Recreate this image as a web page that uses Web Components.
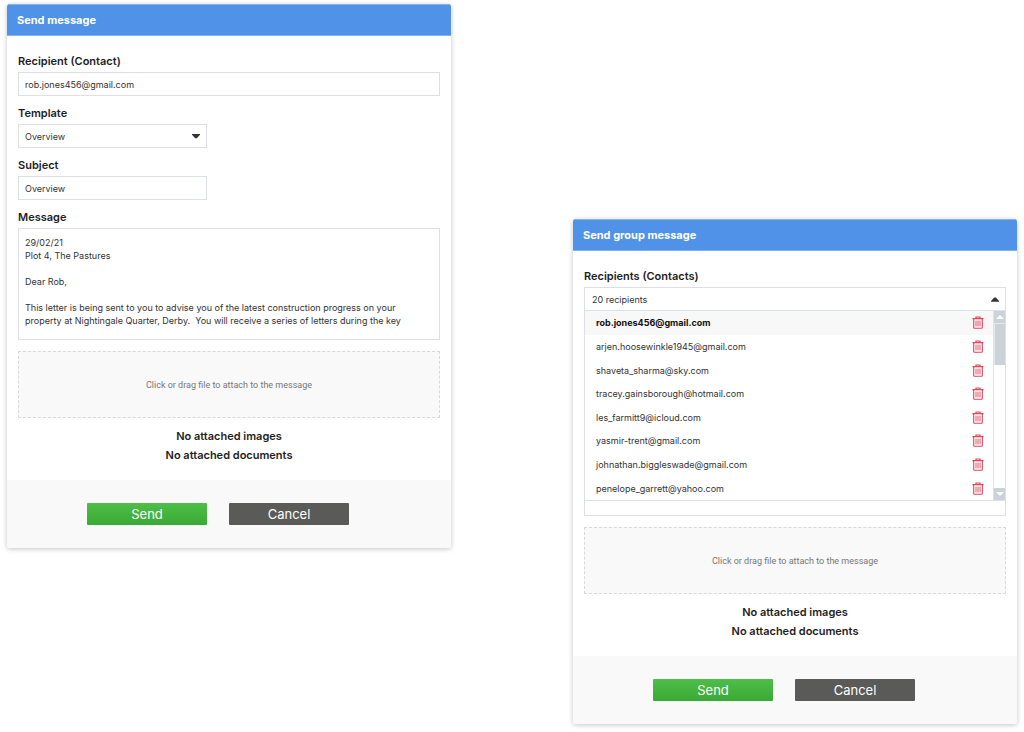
<!DOCTYPE html>
<html lang="en">
<head>
<meta charset="utf-8">
<title>Send message</title>
<style>
  body {
    margin: 0;
    background: #fff;
    color: #1e1e1e;
    font-family: Inter, "Open Sans", sans-serif;
    font-size: 9px;
  }
</style>
</head>
<body>
<message-page></message-page>

<script>
const define = (name, html, setup) => {
  const template = document.createElement('template');
  template.innerHTML = `<style>*, ::before, ::after { box-sizing: border-box; } :host { box-sizing: border-box; }</style>${html}`;
  customElements.define(name, class extends HTMLElement {
    constructor() {
      super();
      this.attachShadow({ mode: 'open' }).append(template.content.cloneNode(true));
    }
    connectedCallback() {
      if (setup && !this.ready) setup(this, this.shadowRoot);
      this.ready = true;
    }
  });
};

const labelStyle = `
  label, .label { display: block; font-size: 11px; font-weight: 600; line-height: 16px; margin-bottom: 3px; }`;
const boxStyle = `
  .box { display: block; width: 100%; height: 24px; margin: 0; padding: 0 6px; border: 1px solid #dcdfe3;
    border-radius: 0; background: #fff; color: #333; font: inherit; outline: none; appearance: none; }`;

define('text-field', `
  <style>
    :host { display: block; }
    :host([short]) .box { width: 189px; }
    ${labelStyle}${boxStyle}
  </style>
  <label for="control"></label>
  <input class="box" id="control" type="text">`, (host, root) => {
  root.querySelector('label').textContent = host.getAttribute('label');
  root.querySelector('input').value = host.getAttribute('value');
});

define('select-field', `
  <style>
    :host { display: block; }
    ${labelStyle}${boxStyle}
    .wrap { display: block; position: relative; width: 189px; }
    svg { position: absolute; right: 7px; top: 10px; width: 8px; height: 5px; pointer-events: none; }
  </style>
  <label for="control"></label>
  <span class="wrap">
    <select class="box" id="control"></select>
    <svg viewBox="0 0 8 5" fill="#333" aria-hidden="true"><path d="M0 0h8v.8L4.8 4.2H3.2L0 .8z"/></svg>
  </span>`, (host, root) => {
  root.querySelector('label').textContent = host.getAttribute('label');
  root.querySelector('select').add(new Option(host.getAttribute('value')));
});

define('message-field', `
  <style>
    :host { display: block; }
    ${labelStyle}${boxStyle}
    textarea.box { height: 112px; padding: 7px 6px; line-height: 13px; resize: none; overflow: hidden; }
  </style>
  <label for="control"></label>
  <textarea class="box" id="control"></textarea>`, (host, root) => {
  root.querySelector('label').textContent = host.getAttribute('label');
  root.querySelector('textarea').value = host.textContent.trim();
});

define('trash-icon', `
  <style>
    :host { display: block; width: 12px; height: 13px; }
    svg { display: block; width: 100%; height: 100%; }
  </style>
  <svg viewBox="0 0 12 13" fill="none" stroke="#e04457" aria-hidden="true">
    <path d="M.5 2.7h11M4 2.6V1h4v1.6" stroke-width="1.2"/>
    <path d="M1.7 3v8.7q0 .6.8.6h7q.8 0 .8-.6V3" stroke-width="1.1"/>
    <path d="M4 4.6v5.8M6 4.6v5.8M8 4.6v5.8" stroke-width=".9"/>
  </svg>`);

define('recipient-row', `
  <style>
    :host { display: flex; align-items: center; justify-content: space-between; padding: 0 9px 0 11px; color: #333; }
    :host([current]) { background: #f8f8f8; color: #111; font-weight: 700; }
    button { padding: 0; border: 0; background: none; cursor: pointer; }
  </style>
  <slot></slot>
  <button type="button"><trash-icon></trash-icon></button>`, (host, root) => {
  root.querySelector('button').setAttribute('aria-label', `Remove ${host.textContent}`);
});

define('recipient-picker', `
  <style>
    :host { display: block; }
    ${labelStyle}
    .frame { border: 1px solid #dcdfe3; padding-bottom: 14px; }
    .toggle { display: flex; align-items: center; justify-content: space-between; width: 100%; height: 22px;
      padding: 0 6px 0 7px; border: 0; background: #fff; color: #333; font: inherit; cursor: pointer; }
    .toggle svg { width: 8px; height: 5px; }
    .panel { display: flex; height: 191px; border: solid #dbe2e9; border-width: 1px 0; }
    .rows { flex: 1; display: grid; grid-auto-rows: 1fr; }
    .bar { display: flex; flex-direction: column; width: 12px; border-left: 1px solid #dbe2e9; }
    .step { display: grid; place-items: center; height: 12px; background: #cdd2d9; }
    .step svg { display: block; width: 8px; height: 4px; }
    .track { flex: 1; }
    .thumb { height: 42px; background: #cdd2d9; border: solid #e6e9ec; border-width: 1px 0 0 1px; }
  </style>
  <span class="label" id="name"></span>
  <div class="frame">
    <button class="toggle" type="button" aria-expanded="true" aria-describedby="name">
      <slot name="summary"></slot>
      <svg viewBox="0 0 8 5" fill="#333" aria-hidden="true"><path d="M3.2.6h1.6L8 4v.8H0V4z"/></svg>
    </button>
    <div class="panel">
      <div class="rows" role="list" aria-labelledby="name"><slot></slot></div>
      <div class="bar" aria-hidden="true">
        <div class="step"><svg viewBox="0 0 8 4" fill="#fff"><path d="M4 0l4 4H0z"/></svg></div>
        <div class="track"><div class="thumb"></div></div>
        <div class="step"><svg viewBox="0 0 8 4" fill="#fff"><path d="M0 0h8L4 4z"/></svg></div>
      </div>
    </div>
  </div>`, (host, root) => {
  root.querySelector('.label').textContent = host.getAttribute('label');
});

define('attach-zone', `
  <style>
    :host { display: block; margin-top: 11px; text-align: center; }
    .drop { display: block; width: 100%; height: 67px; border: 1px dashed #d9d9d9; background: #f9f9f9;
      color: #777; font: inherit; font-family: Roboto, Inter, sans-serif; cursor: pointer; }
    .status { margin: 9px 0 0; font-size: 11px; font-weight: 600; line-height: 19px; }
    .status + .status { margin: 0; }
  </style>
  <button class="drop" type="button">Click or drag file to attach to the message</button>
  <p class="status">No attached images</p>
  <p class="status">No attached documents</p>`);

define('action-button', `
  <style>
    :host { display: block; flex: 0 1 120px; }
    button { display: block; width: 100%; height: 22px; padding: 0; border: 0; border-radius: 1px;
      background: #5a5a59; color: #fff; font: inherit; font-size: 13px; line-height: 22px; cursor: pointer; }
    :host([primary]) button { background: linear-gradient(#4dbf49, #3ba935); }
  </style>
  <button type="button"><slot></slot></button>`);

define('message-card', `
  <style>
    :host { display: block; border-radius: 3px; background: #fff; box-shadow: 0 1px 5px rgba(0, 0, 0, .24); overflow: hidden; }
    h2 { margin: 0; height: 32px; padding: 0 10px; border: solid #85b3ee; border-width: 1px 0; background: #4f92e8;
      color: #fff; font-size: 11px; font-weight: 700; line-height: 30px; }
    .body { padding: 17px 11px 15px; }
    .fields { display: grid; gap: 9px; }
    footer { display: flex; justify-content: center; gap: 22px; padding: 23px 33px 23px 11px; background: #f9f9f9; }
  </style>
  <h2></h2>
  <div class="body">
    <div class="fields"><slot></slot></div>
    <attach-zone></attach-zone>
  </div>
  <footer>
    <action-button primary>Send</action-button>
    <action-button>Cancel</action-button>
  </footer>`, (host, root) => {
  root.querySelector('h2').textContent = host.getAttribute('heading');
});

define('message-page', `
  <style>
    :host { display: grid; grid-template-columns: 1fr 1fr; column-gap: 122px; align-items: start; padding: 4px 7px 8px; }
    .group { margin-top: 215px; }
  </style>
  <message-card heading="Send message">
    <text-field label="Recipient (Contact)" value="rob.jones456@gmail.com"></text-field>
    <select-field label="Template" value="Overview"></select-field>
    <text-field short label="Subject" value="Overview"></text-field>
    <message-field label="Message">29/02/21
Plot 4, The Pastures

Dear Rob,

This letter is being sent to you to advise you of the latest construction progress on your
property at Nightingale Quarter, Derby.  You will receive a series of letters during the key</message-field>
  </message-card>
  <message-card class="group" heading="Send group message">
    <recipient-picker label="Recipients (Contacts)">
      <span slot="summary">20 recipients</span>
      <recipient-row role="listitem" current>rob.jones456@gmail.com</recipient-row>
      <recipient-row role="listitem">arjen.hoosewinkle1945@gmail.com</recipient-row>
      <recipient-row role="listitem">shaveta_sharma@sky.com</recipient-row>
      <recipient-row role="listitem">tracey.gainsborough@hotmail.com</recipient-row>
      <recipient-row role="listitem">les_farmitt9@icloud.com</recipient-row>
      <recipient-row role="listitem">yasmir-trent@gmail.com</recipient-row>
      <recipient-row role="listitem">johnathan.biggleswade@gmail.com</recipient-row>
      <recipient-row role="listitem">penelope_garrett@yahoo.com</recipient-row>
    </recipient-picker>
  </message-card>`);
</script>
</body>
</html>
